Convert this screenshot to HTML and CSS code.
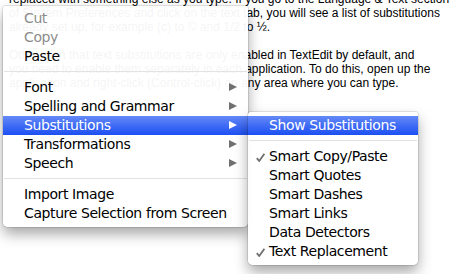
FILE: index.html
```html
<!DOCTYPE html>
<html lang="en">
<head>
	<meta charset="UTF-8">
	<title>Context menu</title>
	<link rel="stylesheet" href="styles.css">
</head>
<body>

	<div class="doc">
		<p>replaced with something else as you type. If you go to the Language &amp; Text section<br>
		of System Preferences and click on the text tab, you will see a list of substitutions<br>
		already set up, for example (c) to &copy; and 1/2 to &frac12;.</p>
		<p>Other than that text substitutions are only enabled in TextEdit by default, and<br>
		you need to enable them separately in each application. To do this, open up the<br>
		application and right-click (Control-click) on any area where you can type.</p>
	</div>

	<ul class="menu menu-main">
		<li class="menu-item disabled">Cut</li>
		<li class="menu-item disabled">Copy</li>
		<li class="menu-item">Paste</li>
		<li class="menu-sep"></li>
		<li class="menu-item has-sub">Font</li>
		<li class="menu-item has-sub">Spelling and Grammar</li>
		<li class="menu-item has-sub active">Substitutions</li>
		<li class="menu-item has-sub">Transformations</li>
		<li class="menu-item has-sub">Speech</li>
		<li class="menu-sep"></li>
		<li class="menu-item">Import Image</li>
		<li class="menu-item">Capture Selection from Screen</li>
	</ul>

	<ul class="menu menu-sub">
		<li class="menu-item active">Show Substitutions</li>
		<li class="menu-sep"></li>
		<li class="menu-item checked">Smart Copy/Paste</li>
		<li class="menu-item">Smart Quotes</li>
		<li class="menu-item">Smart Dashes</li>
		<li class="menu-item">Smart Links</li>
		<li class="menu-item">Data Detectors</li>
		<li class="menu-item checked">Text Replacement</li>
	</ul>

</body>
</html>
```

FILE: styles.css
```css
html, body {
	margin: 0;
	padding: 0;
	background: #ffffff;
	overflow: hidden;
}

.doc {
	margin-top: -8px;
	padding-left: 9px;
	font-family: "Liberation Sans", Arial, sans-serif;
	font-size: 12px;
	line-height: 14px;
	color: #000;
	white-space: nowrap;
}
.doc p {
	margin: 0 0 14px 0;
}

.menu {
	position: absolute;
	margin: 0;
	list-style: none;
	background-color: rgba(255, 255, 255, 0.955);
	border-radius: 3px 3px 5px 5px;
	box-shadow: 0 0 0 1px rgba(0, 0, 0, 0.1), 0 7px 14px rgba(0, 0, 0, 0.35);
	font-family: "DejaVu Sans", sans-serif;
	font-size: 14px;
	letter-spacing: -0.4px;
	color: #000;
}
.menu-main {
	left: 3px;
	top: 6px;
	width: 245px;
	padding: 3px 0 4px 0;
}
.menu-sub {
	left: 248px;
	top: 112px;
	width: 170px;
	padding: 4px 0 4px 0;
}

.menu-item {
	position: relative;
	height: 19px;
	line-height: 19px;
	padding-left: 21px;
	white-space: nowrap;
}
.menu-item.disabled {
	color: #8c8c8c;
}
.menu-item.active {
	color: #fff;
	background: linear-gradient(#6489f7, #1c4ff3);
}
.menu-sep {
	height: 12px;
	position: relative;
}
.menu-sep::after {
	content: "";
	position: absolute;
	left: 1px;
	right: 1px;
	top: 5px;
	height: 1px;
	background-color: #e2e2e2;
}

.has-sub::after {
	content: "";
	position: absolute;
	right: 11px;
	top: 5px;
	border-style: solid;
	border-width: 4.5px 0 4.5px 8px;
	border-color: transparent transparent transparent #707070;
}
.has-sub.active::after {
	border-left-color: #fff;
}

.checked::before {
	content: "";
	position: absolute;
	left: 8px;
	top: 6px;
	width: 9px;
	height: 9px;
	background: no-repeat center / contain url("data:image/svg+xml;utf8,<svg xmlns='http://www.w3.org/2000/svg' viewBox='0 0 9 9'><path d='M0.8 5.2 L3.2 8 L8.4 0.8' fill='none' stroke='%23707070' stroke-width='1.8'/></svg>");
}
```
